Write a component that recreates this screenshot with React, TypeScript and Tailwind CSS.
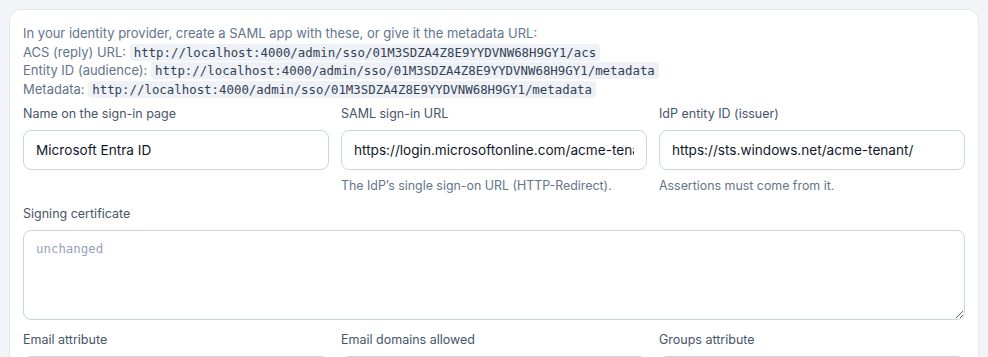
import React from "react";

const sans = "font-['Inter','Noto_Sans',sans-serif]";
const mono = "font-['DejaVu_Sans_Mono',monospace]";

function Code({ children }: { children: React.ReactNode }) {
  return (
    <code className={`${mono} text-[12.4px] leading-none text-[#334155] bg-[#eef1f6] rounded-[4px] px-[4px] py-[1px]`}>
      {children}
    </code>
  );
}

function Field({
  label,
  value,
  help,
}: {
  label: string;
  value?: string;
  help?: string;
}) {
  return (
    <div className="flex flex-col">
      <label className="text-[12.5px] leading-[16px] text-[#475569]">{label}</label>
      <input
        readOnly
        value={value ?? ""}
        className={`mt-2 h-[40px] w-full rounded-[8px] border border-[#cbd5e1] bg-white px-3 text-[13.6px] text-[#0f172a] outline-none ${sans}`}
      />
      {help && <p className="mt-2 text-[12.4px] leading-[16px] text-[#64748b]">{help}</p>}
    </div>
  );
}

export default function App() {
  return (
    <div className={`h-[357px] overflow-hidden bg-[#f3f4f8] px-[9px] pt-[9px] ${sans}`}>
      <div className="rounded-[12px] border border-[#e5e7eb] bg-white px-[13px] pt-[14px] pb-6">
        <div className="text-[13px] leading-[18.5px] text-[#64748b]">
          <div>In your identity provider, create a SAML app with these, or give it the metadata URL:</div>
          <div>
            ACS (reply) URL: <Code>http://localhost:4000/admin/sso/01M3SDZA4Z8E9YYDVNW68H9GY1/acs</Code>
          </div>
          <div>
            Entity ID (audience): <Code>http://localhost:4000/admin/sso/01M3SDZA4Z8E9YYDVNW68H9GY1/metadata</Code>
          </div>
          <div>
            Metadata: <Code>http://localhost:4000/admin/sso/01M3SDZA4Z8E9YYDVNW68H9GY1/metadata</Code>
          </div>
        </div>
        <div className="mt-[8px] grid grid-cols-3 gap-x-3 gap-y-3">
          <Field label="Name on the sign-in page" value="Microsoft Entra ID" />
          <Field
            label="SAML sign-in URL"
            value="https://login.microsoftonline.com/acme-tenant/saml2"
            help="The IdP’s single sign-on URL (HTTP-Redirect)."
          />
          <Field
            label="IdP entity ID (issuer)"
            value="https://sts.windows.net/acme-tenant/"
            help="Assertions must come from it."
          />
          <div className="col-span-3 flex flex-col">
            <label className="text-[12.5px] leading-[16px] text-[#475569]">Signing certificate</label>
            <textarea
              placeholder="unchanged"
              className={`mt-2 h-[90px] w-full rounded-[8px] border border-[#cbd5e1] bg-white px-3 py-[9px] text-[12.4px] text-[#0f172a] placeholder:text-[#94a3b8] outline-none ${mono}`}
            />
          </div>
          <Field label="Email attribute" />
          <Field label="Email domains allowed" />
          <Field label="Groups attribute" />
        </div>
      </div>
    </div>
  );
}
